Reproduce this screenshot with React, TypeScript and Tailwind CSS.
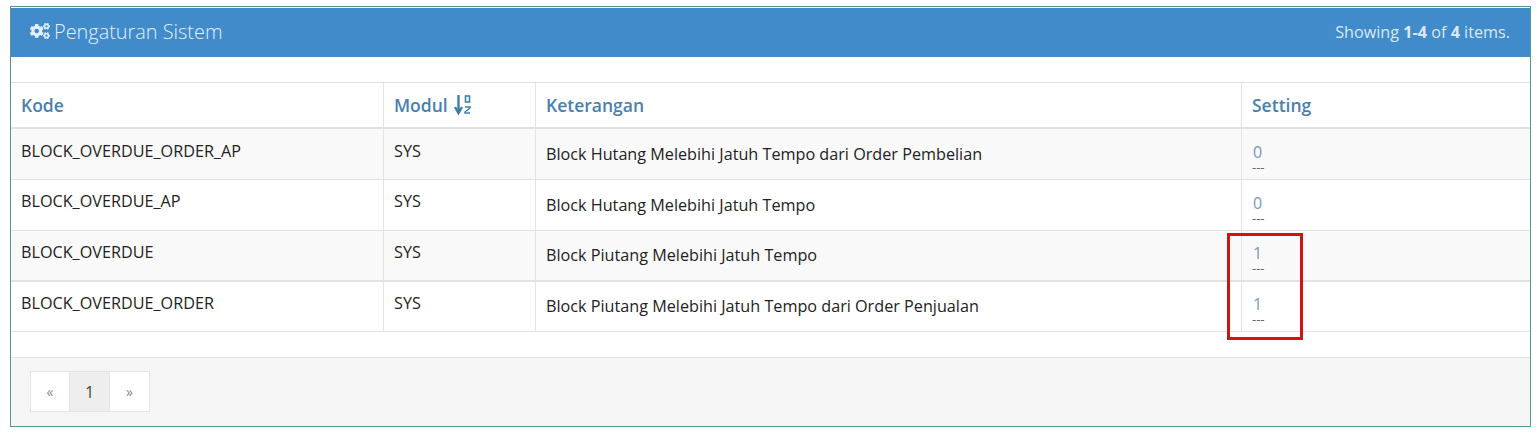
import { FaCogs } from "react-icons/fa";

const rows = [
  { kode: "BLOCK_OVERDUE_ORDER_AP", ket: "Block Hutang Melebihi Jatuh Tempo dari Order Pembelian", val: "0", h: "h-[51px]", bg: "bg-[#f9f9f9]", line: "border-b", top: "pt-[10px]", vtop: "pt-[13px]" },
  { kode: "BLOCK_OVERDUE_AP", ket: "Block Hutang Melebihi Jatuh Tempo", val: "0", h: "h-[51px]", bg: "bg-white", line: "border-b", top: "pt-[9px]", vtop: "pt-[13px]" },
  { kode: "BLOCK_OVERDUE", ket: "Block Piutang Melebihi Jatuh Tempo", val: "1", h: "h-[51px]", bg: "bg-[#f9f9f9]", line: "border-b-2", top: "pt-[9px]", vtop: "pt-[12px]" },
  { kode: "BLOCK_OVERDUE_ORDER", ket: "Block Piutang Melebihi Jatuh Tempo dari Order Penjualan", val: "1", h: "h-[50px]", bg: "bg-white", line: "border-b", top: "pt-[9px]", vtop: "pt-[12px]" },
];

const grid = "grid grid-cols-[372px_152px_706px_1fr]";

function SortIcon() {
  return (
    <svg viewBox="0 0 18 22" className="h-[22px] w-[18px]" fill="none">
      <path d="M4.5 1v17M1 13l3.5 6L8 13" stroke="#3f7fa8" strokeWidth="2.4" />
      <rect x="11.5" y="2" width="4" height="6" stroke="#3f7fa8" strokeWidth="1.6" />
      <path d="M11 13h5v1l-5 4v1h5" stroke="#3f7fa8" strokeWidth="1.5" />
    </svg>
  );
}

export default function App() {
  return (
    <div className="relative h-[442px] w-[1538px] bg-white pl-[10px] pt-[6px] font-['Open_Sans',sans-serif] text-[16.2px] text-[#222]">
      <div className="flex h-[421px] w-[1521px] flex-col border border-[#4f9a94] pt-px">
        <div className="flex h-[49px] shrink-0 items-center justify-between bg-[#428bca] pl-[19px] pr-5">
          <div className="flex -translate-y-px items-center gap-[4px] text-[19.9px] font-light text-[#e2eef8]">
            <FaCogs className="h-[20px] w-[20px]" />
            <span>Pengaturan Sistem</span>
          </div>
          <div className="text-[16.2px] text-[#d9e8f5]">
            Showing <b>1-4</b> of <b>4</b> items.
          </div>
        </div>
        <div className="h-[25px] shrink-0" />
        <div className={`${grid} h-[47px] shrink-0 border-t border-b-2 border-[#e0e0e0] text-[17.5px] font-semibold text-[#4a7fb0]`}>
          <div className="flex items-center px-[10px]">Kode</div>
          <div className="flex items-center gap-[6px] border-l border-[#e4e4e4] px-[10px]">
            Modul <SortIcon />
          </div>
          <div className="flex items-center border-l border-[#e4e4e4] px-[10px]">Keterangan</div>
          <div className="flex items-center border-l border-[#e4e4e4] px-[10px]">Setting</div>
        </div>
        {rows.map((r) => (
          <div key={r.kode} className={`${grid} ${r.h} ${r.bg} ${r.line} shrink-0 border-[#e2e2e2]`}>
            <div className={`px-[10px] ${r.top}`}>{r.kode}</div>
            <div className={`border-l border-[#e4e4e4] px-[10px] ${r.top}`}>SYS</div>
            <div className="flex items-center border-l border-[#e4e4e4] px-[10px]">{r.ket}</div>
            <div className="border-l border-[#e4e4e4] pl-[10px]">
              <div className={`${r.vtop} pl-px text-[16px] leading-[21px] text-[#7898ba]`}>{r.val}</div>
              <div className="text-[13px] leading-[8px] text-[#666]">---</div>
            </div>
          </div>
        ))}
        <div className="h-[25px] shrink-0" />
        <div className="flex flex-1 items-start border-t border-[#e2e2e2] bg-[#f5f5f5] pl-[19px] pt-[13px]">
          <div className="flex h-[41px] border border-[#e4e4e4] text-[#8a8a8a]">
            <div className="flex w-[38px] items-center justify-center bg-white text-[14px]">«</div>
            <div className="flex w-[41px] items-center justify-center border-x border-[#e4e4e4] bg-[#eeeeee] text-[16px] text-[#444]">1</div>
            <div className="flex w-[39px] items-center justify-center bg-white text-[14px]">»</div>
          </div>
        </div>
      </div>
      <div className="absolute left-[1227px] top-[233px] h-[107px] w-[76px] border-[3px] border-[#d01414]" />
    </div>
  );
}
